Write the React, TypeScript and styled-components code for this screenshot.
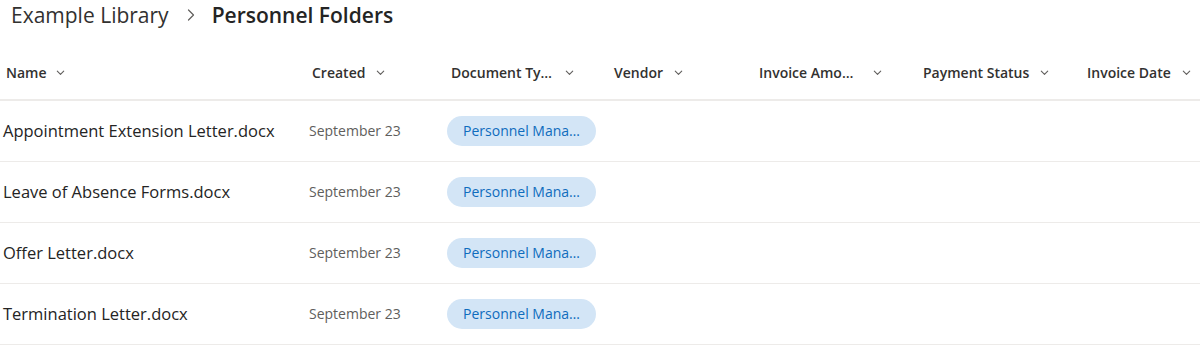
import React from "react";
import styled, { createGlobalStyle } from "styled-components";

const GlobalStyle = createGlobalStyle`
  html, body { margin: 0; padding: 0; background: #ffffff; }
  body { font-family: "Segoe UI", "Open Sans", "Noto Sans", sans-serif; color: #323130; }
  * { box-sizing: border-box; }
`;

const Page = styled.div`
  width: 1200px;
  height: 347px;
  overflow: hidden;
  background: #fff;
`;

const Breadcrumb = styled.div`
  display: flex;
  align-items: center;
  height: 30px;
  padding-left: 11px;
  margin-bottom: 14px;
  font-size: 21px;
  line-height: 30px;
  color: #323130;
`;

const Crumb = styled.span<{ $current?: boolean }>`
  font-weight: ${(p) => (p.$current ? 600 : 400)};
  color: ${(p) => (p.$current ? "#242424" : "#323130")};
`;

const Sep = styled.span`
  display: flex;
  align-items: center;
  margin: 0 16px 0 17px;
  color: #605e5c;
`;

const cols = "300px 140px 163px 145px 164px 164px 1fr";

const HeaderRow = styled.div`
  display: grid;
  grid-template-columns: ${cols};
  height: 57px;
  padding-top: 1px;
  align-items: center;
  border-bottom: 2px solid #edebe9;
`;

const HeaderCell = styled.div<{ $pad: number }>`
  display: flex;
  align-items: center;
  padding-left: ${(p) => p.$pad}px;
  font-size: 14px;
  font-weight: 600;
  color: #323130;
  white-space: nowrap;
`;

const Chevron = styled.span<{ $gap: number }>`
  display: flex;
  align-items: center;
  margin-left: ${(p) => p.$gap}px;
  color: #605e5c;
`;

const Row = styled.div`
  display: grid;
  grid-template-columns: ${cols};
  height: 61px;
  padding-bottom: 1px;
  align-items: center;
  border-bottom: 1px solid #edebe9;
`;

const NameCell = styled.div`
  padding-left: 3px;
  font-size: 16.5px;
  color: #242424;
  white-space: nowrap;
`;

const DateCell = styled.div`
  padding-left: 9px;
  font-size: 14px;
  color: #605e5c;
  white-space: nowrap;
`;

const PillCell = styled.div`
  padding-left: 7px;
`;

const Pill = styled.span`
  display: inline-flex;
  align-items: center;
  justify-content: center;
  width: 149px;
  height: 30px;
  border-radius: 15px;
  background: #d3e5f6;
  color: #0f6cbd;
  font-size: 14px;
  white-space: nowrap;
`;

const ChevronDown = () => (
  <svg width="11" height="11" viewBox="0 0 12 12" fill="none">
    <path d="M2.5 4.5 L6 8 L9.5 4.5" stroke="currentColor" strokeWidth="1.2" strokeLinecap="round" strokeLinejoin="round" />
  </svg>
);

const ChevronRight = () => (
  <svg width="10" height="16" viewBox="0 0 10 16" fill="none">
    <path d="M2.5 3 L7.5 8 L2.5 13" stroke="currentColor" strokeWidth="1.2" strokeLinecap="round" strokeLinejoin="round" />
  </svg>
);

const headers: { label: string; pad: number; gap: number }[] = [
  { label: "Name", pad: 6, gap: 8 },
  { label: "Created", pad: 12, gap: 10 },
  { label: "Document Ty…", pad: 11, gap: 12 },
  { label: "Vendor", pad: 11, gap: 10 },
  { label: "Invoice Amo…", pad: 11, gap: 19 },
  { label: "Payment Status", pad: 11, gap: 10 },
  { label: "Invoice Date", pad: 11, gap: 10 },
];

const files = [
  "Appointment Extension Letter.docx",
  "Leave of Absence Forms.docx",
  "Offer Letter.docx",
  "Termination Letter.docx",
];

export default function App() {
  return (
    <Page>
      <GlobalStyle />
      <Breadcrumb>
        <Crumb>Example Library</Crumb>
        <Sep>
          <ChevronRight />
        </Sep>
        <Crumb $current>Personnel Folders</Crumb>
      </Breadcrumb>
      <HeaderRow>
        {headers.map((h) => (
          <HeaderCell key={h.label} $pad={h.pad}>
            {h.label}
            <Chevron $gap={h.gap}>
              <ChevronDown />
            </Chevron>
          </HeaderCell>
        ))}
      </HeaderRow>
      {files.map((f) => (
        <Row key={f}>
          <NameCell>{f}</NameCell>
          <DateCell>September 23</DateCell>
          <PillCell>
            <Pill>Personnel Mana…</Pill>
          </PillCell>
          <div />
          <div />
          <div />
          <div />
        </Row>
      ))}
    </Page>
  );
}
